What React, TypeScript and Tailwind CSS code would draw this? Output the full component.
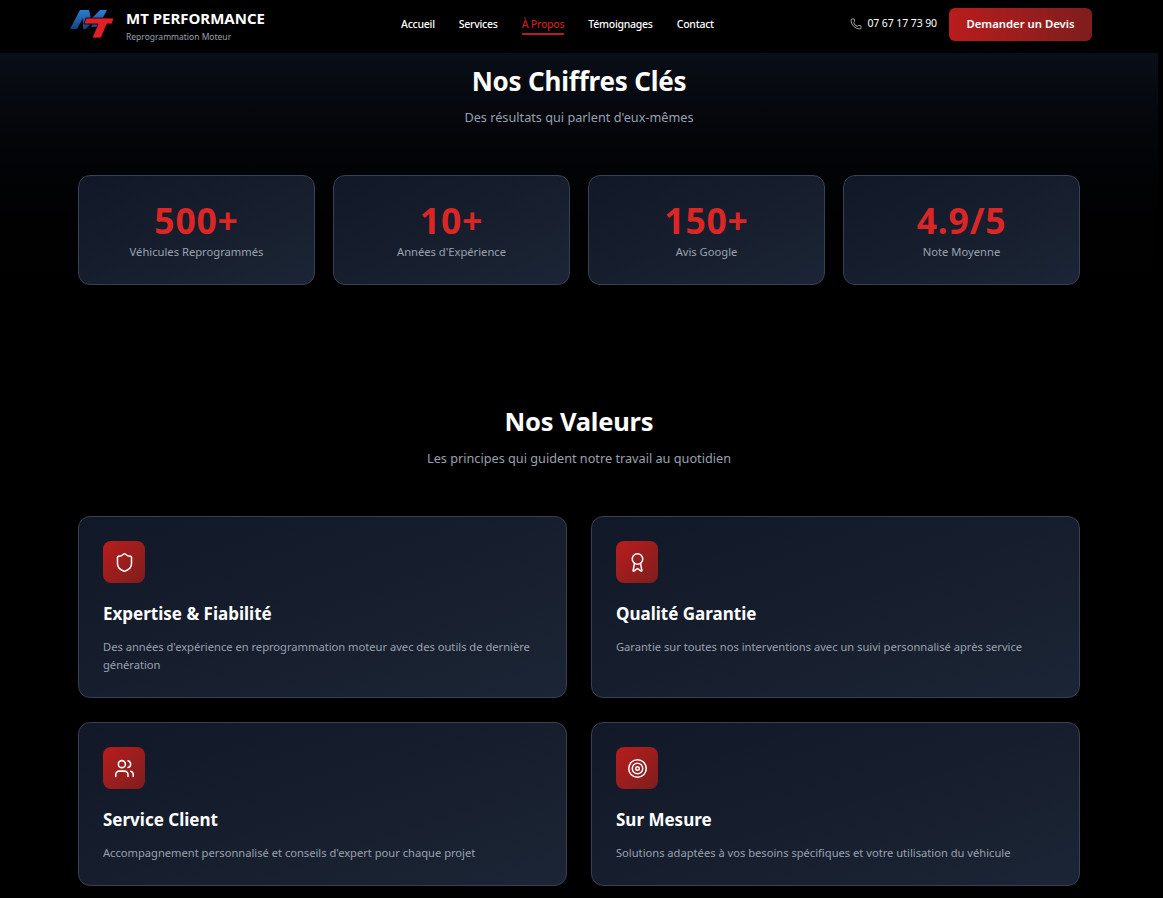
import { Phone, Shield, Award, Users, Target } from "lucide-react";

const font = { fontFamily: '"Noto Sans", "Liberation Sans", sans-serif' };

const stats = [
  ["500+", "Véhicules Reprogrammés"],
  ["10+", "Années d'Expérience"],
  ["150+", "Avis Google"],
  ["4.9/5", "Note Moyenne"],
];

const values = [
  { Icon: Shield, t: "Expertise & Fiabilité", d: "Des années d'expérience en reprogrammation moteur avec des outils de dernière génération", h: "h-[182px]" },
  { Icon: Award, t: "Qualité Garantie", d: "Garantie sur toutes nos interventions avec un suivi personnalisé après service", h: "h-[182px]" },
  { Icon: Users, t: "Service Client", d: "Accompagnement personnalisé et conseils d'expert pour chaque projet", h: "h-[164px]" },
  { Icon: Target, t: "Sur Mesure", d: "Solutions adaptées à vos besoins spécifiques et votre utilisation du véhicule", h: "h-[164px]" },
];

function Logo() {
  return (
    <svg width="46" height="30" viewBox="0 0 46 30" className="shrink-0">
      <defs>
        <linearGradient id="mblue" x1="0" y1="0" x2="0" y2="1">
          <stop offset="0" stopColor="#2a7fd6" />
          <stop offset="1" stopColor="#14427f" />
        </linearGradient>
      </defs>
      <polygon points="0,20 10,1 19,1 21,10 30,1 37,1 28,18 21,18 25,10 16,20 13,20 13,9 7,20" fill="url(#mblue)" />
      <polygon points="16,9 44,9 42,15 37,15 31,29 22,29 28,15 14,15" fill="#e01f26" stroke="#000" strokeWidth="0.8" />
    </svg>
  );
}

export default function App() {
  return (
    <div className="h-[898px] overflow-hidden bg-black text-white" style={font}>
      <header className="h-[53px] bg-black flex items-center pb-[5px] pl-[70px] pr-[71px]">
        <Logo />
        <div className="ml-2.5 mt-[3px] w-[275px]">
          <div className="text-[15px] leading-[20px] font-bold whitespace-nowrap">MT PERFORMANCE</div>
          <div className="text-[8.5px] leading-[13px] mt-[2px] text-gray-400 whitespace-nowrap">Reprogrammation Moteur</div>
        </div>
        <nav className="flex items-center gap-6 text-[10.5px] leading-[16px] font-medium tracking-[-0.25px]">
          <a className="text-white">Accueil</a>
          <a className="text-white">Services</a>
          <a className="relative text-[#c81e1e]">
            À Propos
            <span className="absolute left-0 right-0 top-[17px] h-[2px] bg-[#b91c1c]" />
          </a>
          <a className="text-white">Témoignages</a>
          <a className="text-white">Contact</a>
        </nav>
        <div className="ml-auto flex items-center gap-[5px] text-[10.5px] text-white tracking-[-0.1px]">
          <Phone size={12} strokeWidth={1.5} className="text-gray-300" />
          <span>07 67 17 73 90</span>
        </div>
        <button className="ml-3 w-[143px] h-[33px] rounded-md bg-gradient-to-r from-[#b91c1c] to-[#7f1d1d] text-[11.3px] font-semibold text-white">
          Demander un Devis
        </button>
      </header>

      <div className="w-[1158px]">
        <section className="h-[296px] bg-gradient-to-b from-[#0a0e16] to-black px-[78px] pt-[10px]">
          <h2 className="text-[26px] leading-[36px] font-bold text-center tracking-[-0.2px]">Nos Chiffres Clés</h2>
          <p className="mt-[8px] text-[12.7px] leading-[20px] text-gray-400 text-center">Des résultats qui parlent d'eux-mêmes</p>
          <div className="mt-[48px] grid grid-cols-4 gap-[18px]">
            {stats.map(([n, l]) => (
              <div key={l} className="h-[110px] rounded-xl border border-[#374151] bg-gradient-to-br from-[#111827] to-[#1c2535] flex flex-col items-center pt-[24px]">
                <div className="text-[35.5px] leading-[40px] font-bold text-[#dc2626] tracking-[0.8px]">{n}</div>
                <div className="mt-[4px] text-[11.2px] leading-[16px] text-gray-400">{l}</div>
              </div>
            ))}
          </div>
        </section>

        <section className="px-[78px] pt-[54px]">
          <h2 className="text-[25.5px] leading-[36px] font-bold text-center tracking-[-0.2px]">Nos Valeurs</h2>
          <p className="mt-[9px] text-[12.7px] leading-[20px] text-gray-400 text-center">Les principes qui guident notre travail au quotidien</p>
          <div className="mt-[48px] grid grid-cols-2 gap-x-6 gap-y-6">
            {values.map(({ Icon, t, d, h }) => (
              <div key={t} className={`${h} rounded-xl border border-[#374151] bg-gradient-to-br from-[#111827] to-[#1c2535] p-6`}>
                <div className="w-[42px] h-[42px] rounded-lg bg-gradient-to-br from-[#b91c1c] to-[#7f1d1d] flex items-center justify-center">
                  <Icon size={21} strokeWidth={1.75} className="text-white" />
                </div>
                <h3 className="mt-[18px] text-[17px] leading-[26px] font-bold">{t}</h3>
                <p className="mt-[11px] text-[11.15px] leading-[18px] text-gray-400">{d}</p>
              </div>
            ))}
          </div>
        </section>
      </div>
    </div>
  );
}
